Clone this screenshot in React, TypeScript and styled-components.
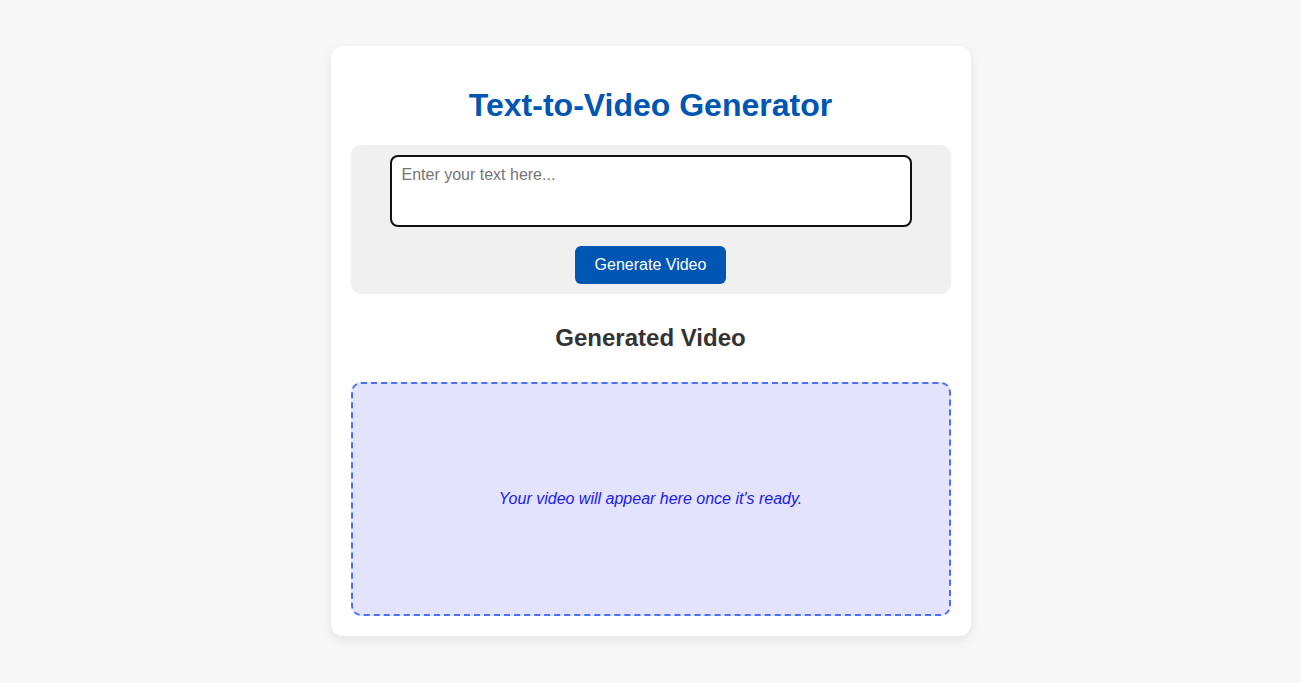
import styled, { createGlobalStyle } from 'styled-components';

const GlobalStyle = createGlobalStyle`
	body {
		margin: 0;
		background: #f7f7f7;
		font-family: 'Liberation Sans', Arial, sans-serif;
	}
`;

const Page = styled.div`
	display: flex;
	justify-content: center;
	align-items: flex-start;
	padding-top: 46px;
	min-height: 683px;
	box-sizing: border-box;
`;

const Card = styled.div`
	width: 640px;
	box-sizing: border-box;
	padding: 20px;
	background: #fff;
	border-radius: 12px;
	box-shadow: 0 4px 12px rgba(0, 0, 0, 0.08);
	text-align: center;
`;

const Title = styled.h1`
	margin: 21px 0;
	font-size: 32px;
	line-height: 37px;
	color: #0056b3;
`;

const InputSection = styled.div`
	display: flex;
	flex-direction: column;
	align-items: center;
	gap: 19px;
	padding: 10px;
	background: #f0f0f0;
	border-radius: 10px;
`;

const TextInput = styled.textarea`
	width: 90%;
	height: 72px;
	box-sizing: border-box;
	padding: 9px 10px;
	border: 2px solid #111;
	border-radius: 8px;
	font-family: 'Liberation Sans', Arial, sans-serif;
	font-size: 16px;
	resize: none;
	outline: none;

	&::placeholder {
		color: #757575;
	}
`;

const Button = styled.button`
	height: 38px;
	padding: 0 20px;
	border: none;
	border-radius: 6px;
	background: #0056b3;
	color: #fff;
	font-family: 'Liberation Sans', Arial, sans-serif;
	font-size: 16px;
	cursor: pointer;
`;

const SubTitle = styled.h2`
	margin: 30px 0;
	font-size: 24px;
	line-height: 28px;
	color: #333;
`;

const VideoBox = styled.div`
	display: flex;
	align-items: center;
	justify-content: center;
	height: 234px;
	box-sizing: border-box;
	border: 2px dashed #4a70f4;
	border-radius: 10px;
	background: #e3e3fd;
`;

const Placeholder = styled.p`
	margin: 0;
	font-size: 16px;
	font-style: italic;
	color: #1a1aee;
`;

export default function App() {
	return (
		<>
			<GlobalStyle />
			<Page>
				<Card>
					<Title>Text-to-Video Generator</Title>
					<InputSection>
						<TextInput placeholder="Enter your text here..." />
						<Button>Generate Video</Button>
					</InputSection>
					<SubTitle>Generated Video</SubTitle>
					<VideoBox>
						<Placeholder>Your video will appear here once it's ready.</Placeholder>
					</VideoBox>
				</Card>
			</Page>
		</>
	);
}
